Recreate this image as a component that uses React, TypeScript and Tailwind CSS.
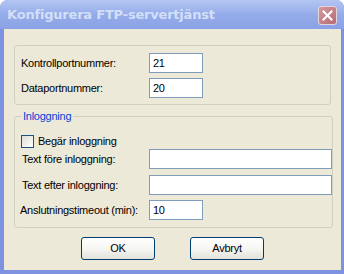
export default function App() {
  const inputCls =
    "h-[20px] border border-[#7F9DB9] bg-white px-[3px] text-[11px] leading-[18px] text-black outline-none";
  return (
    <div className="w-[344px] h-[274px] flex flex-col rounded-t-[8px] overflow-hidden bg-[#7F92E0] font-[Tahoma,'Liberation_Sans',Arial,sans-serif] text-[11px] tracking-[-0.25px] text-black">
      {/* Title bar */}
      <div className="h-[29px] shrink-0 flex items-center justify-between pl-[7px] pr-[7px] bg-gradient-to-b from-[#B4C6F2] via-[#95ACEA] to-[#8AA1E6]">
        <span className="text-[13px] font-bold text-[#D3DFF7] font-['Trebuchet_MS','DejaVu_Sans',sans-serif] tracking-[-0.2px] pt-[1px]">
          Konfigurera FTP-servertjänst
        </span>
        <div className="w-[19px] h-[19px] mt-[1px] rounded-[3px] border border-[#E7D4DA] bg-gradient-to-br from-[#D59A9F] to-[#B56C75] flex items-center justify-center">
          <svg width="11" height="11" viewBox="0 0 11 11">
            <path d="M1.5 1.5 L9.5 9.5 M9.5 1.5 L1.5 9.5" stroke="white" strokeWidth="2" strokeLinecap="square" />
          </svg>
        </div>
      </div>

      {/* Client */}
      <div className="flex-1 ml-[4px] mr-[3px] mb-[4px] bg-[#ECE9D8] px-[10px] pt-[16px] flex flex-col">
        <div className="h-[60px] border border-[#D0D0BF] rounded-[3px] pt-[7px] pl-[6px] flex flex-col gap-[5px]">
          <div className="grid grid-cols-[128px_auto] items-center">
            <span>Kontrollportnummer:</span>
            <input className={`${inputCls} w-[54px]`} defaultValue="21" />
          </div>
          <div className="grid grid-cols-[128px_auto] items-center">
            <span>Dataportnummer:</span>
            <input className={`${inputCls} w-[54px]`} defaultValue="20" />
          </div>
        </div>

        <fieldset className="mt-[5px] border border-[#D0D0BF] rounded-[3px] pl-[6px] pb-[7px]">
          <legend className="ml-0 px-[2px] text-[#0046D5] leading-[13px]">Inloggning</legend>
          <div className="flex flex-col pt-[12px]">
            <label className="flex items-center gap-[4px] h-[13px]">
              <span className="w-[13px] h-[13px] border border-[#1C5180] bg-gradient-to-br from-[#DCDCD7] to-white" />
              <span>Begär inloggning</span>
            </label>
            <div className="grid grid-cols-[128px_auto] items-center mt-[1px]">
              <span className="pl-[1px]">Text före inloggning:</span>
              <input className={`${inputCls} w-[183px]`} defaultValue="" />
            </div>
            <div className="grid grid-cols-[128px_auto] items-center mt-[6px]">
              <span className="pl-[1px]">Text efter inloggning:</span>
              <input className={`${inputCls} w-[183px]`} defaultValue="" />
            </div>
            <div className="grid grid-cols-[128px_auto] items-center mt-[5px]">
              <span className="-ml-[1px]">Anslutningstimeout (min):</span>
              <input className={`${inputCls} w-[54px]`} defaultValue="10" />
            </div>
          </div>
        </fieldset>

        <div className="mt-[9px] flex justify-center gap-[35px]">
          <button className="w-[74px] h-[23px] rounded-[3px] border border-[#003C74] bg-gradient-to-b from-white via-[#F6F6F3] to-[#E3E2DA] text-[11px] text-black">
            OK
          </button>
          <button className="w-[74px] h-[23px] rounded-[3px] border border-[#003C74] bg-gradient-to-b from-white via-[#F6F6F3] to-[#E3E2DA] text-[11px] text-black">
            Avbryt
          </button>
        </div>
      </div>
    </div>
  );
}
